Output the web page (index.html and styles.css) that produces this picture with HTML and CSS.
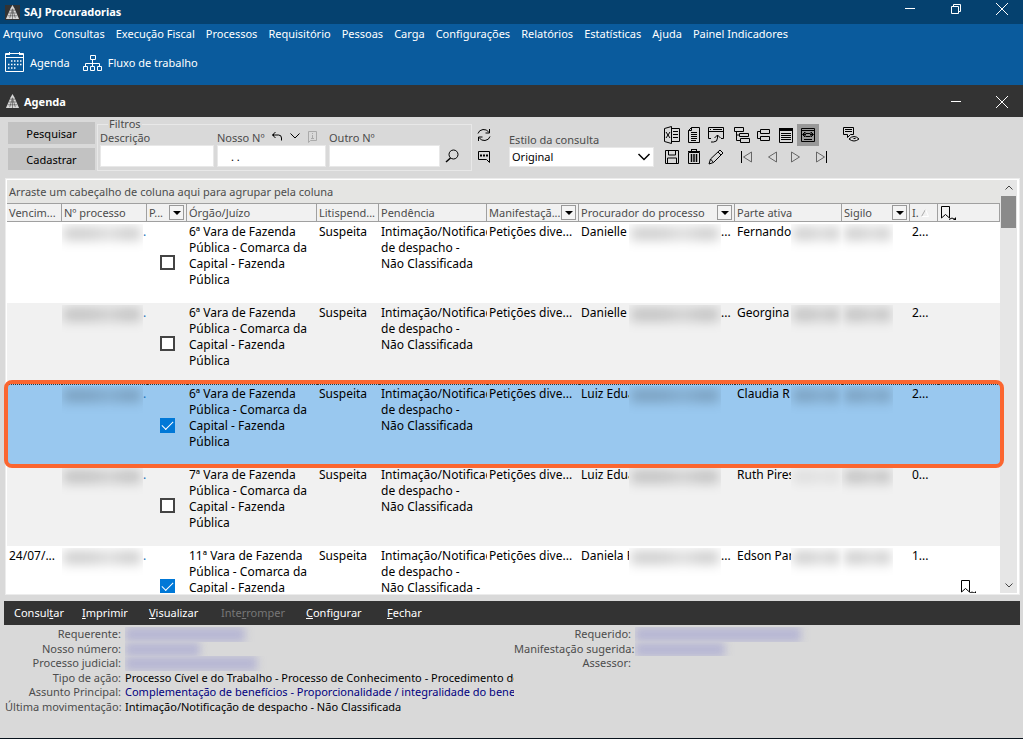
FILE: index.html
```
<!DOCTYPE html>
<html lang="pt-BR">
<head>
<meta charset="utf-8">
<title>SAJ Procuradorias</title>
<link rel="stylesheet" href="styles.css">
</head>
<body>
<svg class="defs" aria-hidden="true">
  <symbol id="logo" viewBox="0 0 16 16"><path fill="#d8d8d8" d="M8 0 L10 3.500 L15 15 H1 L6 3.500Z"/><path stroke="#444" stroke-width=".6" fill="none" d="M5 5.500h6M4 8.500h8M3 11.500h10M5 14L8 4M8 6v9M11 14L8 4"/></symbol>
  <symbol id="close" viewBox="0 0 14 14"><path d="M1 1 L13 13 M13 1 L1 13"/></symbol>
  <symbol id="min" viewBox="0 0 14 14"><path d="M2 6.500h10"/></symbol>
  <symbol id="bookmark" viewBox="0 0 18 16"><path d="M1.500 1.500h8v11.500l-4-3.500l-4 3.500z M9 14.500q3-3 6 0"/><path fill="#000" stroke="none" d="M16 12v3h-3z"/></symbol>
</svg>
<div class="app">
  <header class="titlebar">
    <svg class="logo boxed"><use href="#logo"/></svg>
    <h1>SAJ Procuradorias</h1>
    <div class="window-buttons">
      <button aria-label="Minimizar"><svg width="14" height="14"><use href="#min"/></svg></button>
      <button aria-label="Restaurar"><svg width="14" height="14" viewBox="0 0 14 14"><path d="M2.500 4.500h7v7h-7zM4.500 4.500v-2h7v7h-2"/></svg></button>
      <button aria-label="Fechar"><svg width="14" height="14"><use href="#close"/></svg></button>
    </div>
  </header>
  <div class="ribbon">
    <nav class="menu">
      <button>Arquivo</button><button>Consultas</button><button>Execução Fiscal</button><button>Processos</button><button>Requisitório</button><button>Pessoas</button><button>Carga</button><button>Configurações</button><button>Relatórios</button><button>Estatísticas</button><button>Ajuda</button><button>Painel Indicadores</button>
    </nav>
    <div class="shortcuts">
      <button><svg width="20" height="21" viewBox="0 0 20 21"><path d="M.5 1.500h18v18h-18zM1 5.500h17M1 2.500h3M15 2.500h3M4.500 0v3M14.500 0v3"/><path stroke-width="1.500" stroke-dasharray="1.500 1.500" d="M6 9h11M3 12.500h14M3 16h9"/></svg>Agenda</button>
      <button><svg width="20" height="18" viewBox="0 0 20 18"><path d="M7.500 1.500h5v4h-5zM.5 12.500h4v4h-4zM7.500 12.500h4v4h-4zM14.500 12.500h4v4h-4zM9.500 6v6M2.500 12V9.500h14V12"/></svg>Fluxo de trabalho</button>
    </div>
  </div>
  <div class="subtitle">
    <svg class="logo"><use href="#logo"/></svg>
    <h2>Agenda</h2>
    <div class="window-buttons">
      <button aria-label="Minimizar agenda"><svg width="14" height="14"><use href="#min"/></svg></button>
      <button aria-label="Fechar agenda"><svg width="14" height="14"><use href="#close"/></svg></button>
    </div>
  </div>

  <section class="filters">
    <div class="main-actions"><button>Pesquisar</button><button>Cadastrar</button></div>
    <fieldset>
      <legend>Filtros</legend>
      <div class="fields">
        <div class="field"><label for="desc">Descrição</label><input id="desc" type="text"></div>
        <div class="field">
          <div class="label-row"><label for="nosso">Nosso Nº</label>
            <svg width="12" height="12" viewBox="0 0 12 12"><path d="M4.500 1L1.500 4L4.500 7M1.500 4h6q3 0 3 3v2.500M2.500 3v2"/></svg>
            <svg width="12" height="12" viewBox="0 0 12 12"><path d="M1.500 2.500L6 7l4.500-4.500"/></svg>
            <svg class="faint" width="12" height="12" viewBox="0 0 12 12"><path d="M1.500 .5h8v9h-6l-2 2zM5.500 2v1M5.500 4v4M4 7.500h3"/></svg>
          </div>
          <input id="nosso" class="dots" type="text" value=". .">
        </div>
        <div class="field"><label for="outro">Outro Nº</label><input id="outro" type="text"></div>
        <button class="search" aria-label="Buscar"><svg width="14" height="14" viewBox="0 0 14 14"><circle cx="8.500" cy="5.500" r="4.500"/><path stroke-width="1.500" d="M5.500 9L1 13"/></svg></button>
      </div>
    </fieldset>
    <div class="side-icons">
      <button aria-label="Atualizar"><svg width="14" height="14" viewBox="0 0 14 14"><path d="M1 5.500Q2 2 6 1.500Q10 1 12 4.500M12.500 1v4h-4M13 8.500Q12 12 8 12.500Q4 13 2 9.500M1.500 13V9h4"/></svg></button>
      <button aria-label="Comentários"><svg width="14" height="14" viewBox="0 0 14 14"><path d="M1.500 1.500h11v11l-3-3h-8z"/><path stroke-width="2" stroke-dasharray="2 1" d="M3 5.500h8"/></svg></button>
    </div>
    <div class="style-field"><label for="estilo">Estilo da consulta</label>
      <div class="select-wrap"><select id="estilo"><option>Original</option></select><svg width="14" height="14" viewBox="0 0 14 14"><path stroke-width="1.500" d="M1.500 4L7 9.500L12.500 4"/></svg></div>
    </div>
    <div class="tools">
      <div class="tool-row">
        <button aria-label="Excel"><svg width="18" height="18" viewBox="0 0 18 18"><path d="M8.500 .5v17L1.500 15.500V2.500zM9 2.500h7.500v13H9M10 5.500h5M10 8.500h5M10 11.500h5"/><path d="M3 6l4 6M7 6l-4 6"/></svg></button>
        <button aria-label="Documento"><svg width="18" height="18" viewBox="0 0 18 18"><path d="M6.500 1.500h8v15h-11v-12zM6.500 1.500v3h-3M6 6.500h6M6 8.500h6M6 10.500h6M6 12.500h6M6 14.500h5"/></svg></button>
        <button aria-label="Exportar janela"><svg width="18" height="18" viewBox="0 0 18 18"><path d="M4 12.500H1.500v-11h15v11H14M2 5.500h14M3 3.500h1M6 3.500h9M7.500 12l3-3l3 3M10.500 9v3q0 4-4 4H4"/></svg></button>
        <span class="tool-gap"></span>
        <button aria-label="Expandir"><svg width="18" height="18" viewBox="0 0 18 18"><path d="M1.500 1.500h9v4h-9zM6.500 7.500h9v3h-9zM7.500 12.500h9v4h-9zM3.500 6v8.500h4M4 9h2"/></svg></button>
        <button aria-label="Recolher"><svg width="18" height="18" viewBox="0 0 18 18"><path d="M5.500 3.500h9v4h-9zM5.500 10.500h9v4h-9zM5 5.500H2.500v7h3"/></svg></button>
        <button aria-label="Lista"><svg width="18" height="18" viewBox="0 0 18 18"><path d="M2.500 2.500h13v14h-13zM2 4.500h13M4 7.500h10M4 9.500h10M4 11.500h10M4 13.500h10"/><path stroke-width="2" d="M2 3h14"/></svg></button>
        <button class="active" aria-label="Ajustar largura"><svg width="18" height="18" viewBox="0 0 18 18"><path d="M2.500 2.500h13v13h-13zM3 4.500h12M7 7.500h4M7 10.500h4M5 13.500h8M4 8.500h3M11 8.500h3"/><path d="M6 6L3.500 8.500L6 11zM12 6l2.500 2.500L12 11z"/></svg></button>
        <span class="tool-gap wide"></span>
        <button aria-label="Visualizar comentário"><svg width="18" height="18" viewBox="0 0 18 18"><path d="M1.500 1.500h10v7h-3l-3 3v-3h-4zM3 3.500h7M3 5.500h7M7 13q5-5 10 0q-5 4-10 0zM11.500 12.500h2"/></svg></button>
      </div>
      <div class="tool-row">
        <button aria-label="Salvar"><svg width="18" height="18" viewBox="0 0 18 18"><path d="M2.500 2.500h13v13h-13zM5.500 3v4h7V3M4.500 15v-5h9v5"/></svg></button>
        <button aria-label="Excluir"><svg width="18" height="18" viewBox="0 0 18 18"><path d="M3.500 4.500h11v11h-11zM3 3.500h12M7 1.500h4M6.500 3V1M11.500 3V1"/><path stroke-width="1.500" d="M6.500 6v8M9 6v8M11.500 6v8"/></svg></button>
        <button aria-label="Editar"><svg width="18" height="18" viewBox="0 0 18 18"><path d="M2 16l1.500-5L13 2l3 3l-9.500 9.500zM3.500 11l3 3.500M11 4l3 3"/></svg></button>
        <span class="tool-gap nav"></span>
        <button aria-label="Primeiro"><svg width="18" height="18" viewBox="0 0 18 18"><path d="M3.500 3v12"/><path class="grey" d="M13.500 4v10L5.500 9z"/></svg></button>
        <span class="tool-gap"></span>
        <button aria-label="Anterior"><svg width="18" height="18" viewBox="0 0 18 18"><path class="grey" d="M12.500 4v10L4.500 9z"/></svg></button>
        <button aria-label="Próximo"><svg width="18" height="18" viewBox="0 0 18 18"><path class="grey" d="M5.500 4v10l8-5z"/></svg></button>
        <span class="tool-gap"></span>
        <button aria-label="Último"><svg width="18" height="18" viewBox="0 0 18 18"><path d="M14.500 3v12"/><path class="grey" d="M4.500 4v10l8-5z"/></svg></button>
      </div>
    </div>
  </section>

  <section class="grid-frame">
    <div class="grid-main">
      <p class="group-hint">Arraste um cabeçalho de coluna aqui para agrupar pela coluna</p>
      <div class="grid-view">
        <table>
          <colgroup><col class="c-venc"><col class="c-num"><col class="c-chk"><col class="c-org"><col class="c-lit"><col class="c-pend"><col class="c-man"><col class="c-proc"><col class="c-parte"><col class="c-sig"><col class="c-i"><col></colgroup>
          <thead><tr>
            <th>Vencim...</th><th>Nº processo</th>
            <th><div class="head">P...<button aria-label="Filtrar P"></button></div></th>
            <th>Órgão/Juízo</th><th>Litispend...</th><th>Pendência</th>
            <th><div class="head">Manifestaçã...<button aria-label="Filtrar manifestação"></button></div></th>
            <th><div class="head">Procurador do processo<button aria-label="Filtrar procurador"></button></div></th>
            <th>Parte ativa</th>
            <th><div class="head">Sigilo<button aria-label="Filtrar sigilo"></button></div></th>
            <th><div class="head">I.<svg class="sort" width="8" height="8" viewBox="0 0 8 8"><path d="M.5 7.500L4.500 .5"/><path class="light" d="M4.500 .5l3 7h-7"/></svg></div></th>
            <th><svg width="18" height="16"><use href="#bookmark"/></svg></th>
          </tr></thead>
          <tbody>
            <tr>
              <td></td><td><div class="hidden-number"><i class="smudge"></i><a href="#">.</a></div></td>
              <td class="mid"><input type="checkbox" aria-label="Selecionar Fernando"></td>
              <td>6ª Vara de Fazenda Pública - Comarca da Capital - Fazenda Pública</td><td>Suspeita</td><td>Intimação/Notificação de despacho -<br>Não Classificada</td><td class="one">Petições dive...</td>
              <td><div class="masked"><span>Danielle</span><i class="smudge"></i>...</div></td>
              <td><div class="masked parte"><span>Fernando</span><i class="smudge"></i></div></td>
              <td><i class="smudge sig"></i></td><td>2...</td><td></td>
            </tr>
            <tr class="alt">
              <td></td><td><div class="hidden-number"><i class="smudge"></i><a href="#">.</a></div></td>
              <td class="mid"><input type="checkbox" aria-label="Selecionar Georgina"></td>
              <td>6ª Vara de Fazenda Pública - Comarca da Capital - Fazenda Pública</td><td>Suspeita</td><td>Intimação/Notificação de despacho -<br>Não Classificada</td><td class="one">Petições dive...</td>
              <td><div class="masked"><span>Danielle</span><i class="smudge"></i>...</div></td>
              <td><div class="masked parte"><span>Georgina</span><i class="smudge"></i></div></td>
              <td><i class="smudge sig"></i></td><td>2...</td><td></td>
            </tr>
            <tr class="selected">
              <td></td><td><div class="hidden-number"><i class="smudge"></i><a href="#">.</a></div></td>
              <td class="mid"><input type="checkbox" checked aria-label="Selecionar Claudia"></td>
              <td>6ª Vara de Fazenda Pública - Comarca da Capital - Fazenda Pública</td><td>Suspeita</td><td>Intimação/Notificação de despacho -<br>Não Classificada</td><td class="one">Petições dive...</td>
              <td><div class="masked"><span>Luiz Edua</span><i class="smudge"></i></div></td>
              <td><div class="masked parte"><span>Claudia R</span><i class="smudge"></i></div></td>
              <td><i class="smudge sig"></i></td><td>2...</td><td></td>
            </tr>
            <tr class="alt">
              <td></td><td><div class="hidden-number"><i class="smudge"></i><a href="#">.</a></div></td>
              <td class="mid"><input type="checkbox" aria-label="Selecionar Ruth"></td>
              <td>7ª Vara de Fazenda Pública - Comarca da Capital - Fazenda Pública</td><td>Suspeita</td><td>Intimação/Notificação de despacho -<br>Não Classificada</td><td class="one">Petições dive...</td>
              <td><div class="masked"><span>Luiz Edua</span><i class="smudge"></i></div></td>
              <td><div class="masked parte"><span>Ruth Pires</span><i class="smudge faded"></i></div></td>
              <td><i class="smudge sig"></i></td><td>0...</td><td></td>
            </tr>
            <tr>
              <td class="one">24/07/...</td><td><div class="hidden-number"><i class="smudge"></i><a href="#">.</a></div></td>
              <td class="mid"><input type="checkbox" checked aria-label="Selecionar Edson"></td>
              <td>11ª Vara de Fazenda Pública - Comarca da Capital - Fazenda</td><td>Suspeita</td><td>Intimação/Notificação de despacho -<br>Não Classificada -</td><td class="one">Petições dive...</td>
              <td><div class="masked"><span>Daniela F</span><i class="smudge"></i>...</div></td>
              <td><div class="masked parte"><span>Edson Par</span><i class="smudge"></i></div></td>
              <td><i class="smudge sig"></i></td><td>1...</td><td class="mid"><svg width="18" height="16"><use href="#bookmark"/></svg></td>
            </tr>
          </tbody>
        </table>
      </div>
    </div>
    <div class="scrollbar">
      <button aria-label="Rolar para cima"><svg width="10" height="10" viewBox="0 0 10 10"><path d="M1.500 6.500L5 3l3.500 3.500"/></svg></button>
      <div class="thumb"></div>
      <button aria-label="Rolar para baixo"><svg width="10" height="10" viewBox="0 0 10 10"><path d="M1.500 3.500L5 7l3.500-3.500"/></svg></button>
    </div>
    <div class="callout"></div>
  </section>

  <div class="actions">
    <button>Consul<u>t</u>ar</button><button><u>I</u>mprimir</button><button><u>V</u>isualizar</button><button disabled>Inte<u>r</u>romper</button><button><u>C</u>onfigurar</button><button><u>F</u>echar</button>
  </div>
  <section class="details">
    <dl>
      <dt>Requerente:</dt><dd><i class="veil w-l"></i></dd>
      <dt>Nosso número:</dt><dd><i class="veil w-s"></i></dd>
      <dt>Processo judicial:</dt><dd><i class="veil w-xl"></i></dd>
      <dt>Tipo de ação:</dt><dd>Processo Cível e do Trabalho - Processo de Conhecimento - Procedimento de</dd>
      <dt>Assunto Principal:</dt><dd><a href="#">Complementação de benefícios - Proporcionalidade / integralidade do benef</a></dd>
      <dt>Última movimentação:</dt><dd>Intimação/Notificação de despacho - Não Classificada</dd>
    </dl>
    <dl class="second">
      <dt>Requerido:</dt><dd><i class="veil w-xxl"></i></dd>
      <dt>Manifestação sugerida:</dt><dd><i class="veil w-m"></i></dd>
      <dt>Assessor:</dt><dd></dd>
    </dl>
  </section>
</div>
</body>
</html>
```

FILE: styles.css
```
* { box-sizing: border-box; }
body {
  margin: 0;
  background: #d9d9d9;
  font-family: "Noto Sans", "Open Sans", sans-serif;
  font-size: 11px;
  line-height: 14px;
  color: #000;
}
button { font: inherit; color: inherit; background: none; border: 0; padding: 0; white-space: nowrap; }
svg { fill: none; stroke: currentColor; flex: none; }
h1, h2, p, dl, dd { margin: 0; }
.defs { position: absolute; width: 0; height: 0; }
.app { display: flex; flex-direction: column; height: 100vh; overflow: hidden; border-bottom: 1px solid #08121c; }

.titlebar, .subtitle { display: flex; align-items: center; gap: 4px; padding: 0 14px 0 5px; color: #fff; }
.titlebar { height: 24px; background: #05416f; }
.subtitle { height: 32px; padding-top: 1px; background: #333; }
.titlebar h1, .subtitle h2 { font-size: 11px; font-weight: 700; }
.logo { width: 15px; height: 15px; stroke: none; }
.boxed { background: #333; }
.window-buttons { margin-left: auto; display: flex; gap: 32px; }
.window-buttons svg { display: block; }
.titlebar .window-buttons { margin-bottom: 6px; }

.ribbon { height: 61px; background: #0a5b9d; color: #fff; }
.menu { display: flex; gap: 11px; padding: 3px 3px 0; }
.shortcuts { display: flex; gap: 13px; padding: 11px 5px 0; height: 32px; align-items: center; }
.shortcuts button { display: flex; align-items: center; gap: 5px; }

.filters { display: flex; height: 61px; padding: 0 8px; color: #4c4c4c; }
.filters svg { color: #000; display: block; }
.filters svg.faint { color: #aaa; }
.main-actions { display: flex; flex-direction: column; gap: 4px; width: 87px; padding-top: 5px; }
.main-actions button { height: 22px; padding-top: 1px; background: #c2c2c2; color: #000; }
fieldset { margin: 0 0 0 2px; padding: 0 2px 2px; border: 1px solid #e8e8e8; height: 54px; width: 375px; min-width: 0; }
legend { margin-left: 8px; padding: 0 1px; line-height: 14px; }
.fields { display: flex; gap: 3px; }
.field { display: flex; flex-direction: column; width: 114px; }
.field:nth-child(2) { width: 109px; }
.field:nth-child(3) { width: 111px; }
.label-row { display: flex; gap: 6px; align-items: flex-start; height: 14px; }
.field input { width: 100%; height: 22px; border: 1px solid #e8e8e8; background: #fff; font: inherit; color: #000; padding: 0 2px; }
.field .dots { padding-left: 13px; }
.search { align-self: flex-end; padding: 0 0 4px 2px; }
.side-icons { display: flex; flex-direction: column; gap: 8px; padding: 11px 0 0 5px; }
.style-field { padding: 16px 0 0 18px; width: 163px; }
.style-field label { display: block; }
.select-wrap { display: grid; align-items: center; }
.select-wrap select { grid-area: 1 / 1; appearance: none; width: 100%; height: 20px; border: 1px solid #e8e8e8; border-radius: 0; background: #fff; padding: 0 2px; font: inherit; color: #000; }
.select-wrap svg { grid-area: 1 / 1; justify-self: end; margin-right: 3px; pointer-events: none; }
.tools { padding: 7px 0 0 7px; }
.tool-row { display: flex; }
.tool-row button { width: 22px; height: 22px; display: grid; place-items: center; }
.tool-row .active { background: #999; }
.tool-gap { width: 4px; }
.tool-gap.wide { width: 21px; }
.tool-gap.nav { width: 9px; }
.grey { stroke: #666; }

.grid-frame { position: relative; flex: 1; min-height: 0; display: flex; margin: 0 3px 0 5px; border: 1px solid #ececec; outline: 1px solid #fff; outline-offset: -2px; padding: 1px; }
.grid-main { flex: 1; min-width: 0; display: flex; flex-direction: column; background: #fff; }
.group-hint { height: 23px; padding: 5px 3px 4px 2px; background: #e5e5e3; color: #4c4c4c; }
.grid-view { flex: 1; min-height: 0; overflow: hidden; }
table { width: 100%; table-layout: fixed; border-collapse: separate; border-spacing: 0; font-size: 12px; line-height: 16px; }
.c-venc { width: 55px; } .c-num { width: 85px; } .c-chk { width: 40px; } .c-org { width: 130px; }
.c-lit { width: 62px; } .c-pend { width: 108px; } .c-man { width: 92px; } .c-proc { width: 156px; }
.c-parte { width: 107px; } .c-sig { width: 68px; } .c-i { width: 28px; }
th { height: 19px; padding: 0 0 0 2px; border: solid #a0a0a0; border-width: 1px 1px 1px 0; background: #f1f1f1; font-size: 11px; line-height: 14px; font-weight: 400; color: #4c4c4c; text-align: left; white-space: nowrap; overflow: hidden; }
th svg { display: block; color: #000; }
.head { display: flex; align-items: center; justify-content: space-between; padding-right: 2px; }
.head button { flex: none; width: 15px; height: 15px; border: 1px solid #999; background: #f4f4f4; display: grid; place-items: center; }
.head button::before { content: ""; border: 4px solid transparent; border-top-color: #000; border-bottom: 0; }
.head .sort { color: #aaa; margin-right: 6px; }
.light { stroke: #fff; }
td { height: 81px; padding: 2px 0 0 2px; vertical-align: top; overflow: hidden; }
td.mid { vertical-align: middle; padding: 0; text-align: center; }
td.mid svg, td.mid input { display: block; margin: 0 auto; }
.one { white-space: nowrap; }
.alt td { background: #f1f1f1; }
.selected td { background: #99c8ef; border: dotted #333; border-width: 1px 0; padding-top: 1px; }
input[type="checkbox"] { appearance: none; width: 15px; height: 15px; border: 2px solid #444; background: #fff; }
input[type="checkbox"]:checked { border: 0; background: #0078d7; display: grid; place-items: center; }
input[type="checkbox"]:checked::before { content: ""; width: 10px; height: 5px; border: solid #fff; border-width: 0 0 1px 1px; rotate: -45deg; margin-bottom: 3px; }

.smudge { flex: none; height: 34px; overflow: hidden; display: block; }
.smudge::before { content: ""; display: block; height: 13px; margin: 3px 2px; background: linear-gradient(90deg, #0003, #0003 35%, #0002 60%, #0003 80%, #0003); filter: blur(6px); }
.smudge.faded { opacity: .4; }
.hidden-number { display: flex; margin-left: -3px; height: 34px; }
.hidden-number .smudge { width: 82px; }
.hidden-number a { color: #1a73b8; text-decoration: none; }
.masked { display: flex; }
.masked span { flex: none; width: 48px; overflow: hidden; white-space: nowrap; }
.masked .smudge { width: 92px; }
.masked.parte span { width: 54px; }
.masked.parte .smudge { width: 51px; }
.sig { width: 51px; margin-left: -2px; }

.scrollbar { width: 18px; display: flex; flex-direction: column; background: #e6e6e6; border-right: 1px solid #fff; color: #444; }
.scrollbar button { height: 16px; display: grid; place-items: center; }
.scrollbar .thumb { height: 32px; margin: 0 1px; background: #8a8a8a; }
.scrollbar button:last-child { margin-top: auto; }
.callout { position: absolute; top: 201px; left: -2px; right: 15px; height: 88px; border: 4px solid #fb6630; border-radius: 8px; pointer-events: none; }

.actions { display: grid; grid-template-columns: 68px 67px 72px 85px 81px auto; justify-content: start; justify-items: start; align-items: center; height: 24px; margin: 6px 3px 0 4px; padding: 0 10px; background: #333; color: #fff; }
.actions button:disabled { color: #777; }
.details { display: flex; height: 113px; padding: 2px 0 0 5px; color: #4c4c4c; }
.details dl { display: grid; grid-template-columns: 116px 389px; column-gap: 4px; grid-template-rows: 15px 14px 15px 14px 15px 14px; line-height: 14px; }
.details .second { grid-template-columns: 117px 389px; }
.details dt { text-align: right; white-space: nowrap; }
.details dd { overflow: hidden; white-space: nowrap; color: #000; }
.details dd a { color: #000080; text-decoration: none; }
.veil { display: block; height: 15px; background: #8c8ccc70; filter: blur(4px); }
.w-s { width: 75px; } .w-m { width: 90px; } .w-l { width: 120px; } .w-xl { width: 132px; } .w-xxl { width: 166px; }
```
